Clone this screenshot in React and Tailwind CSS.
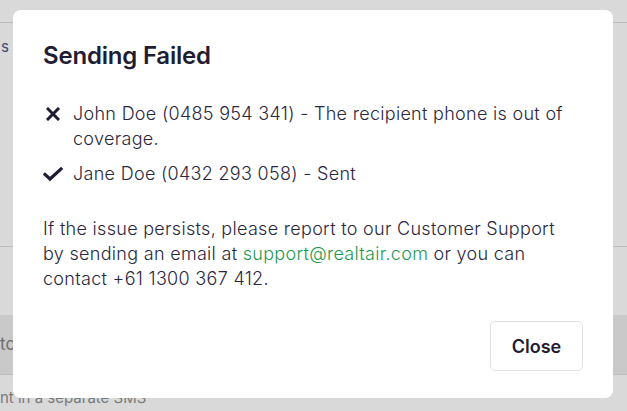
import React from 'react';

const font = { fontFamily: 'Inter, Roboto, "Liberation Sans", sans-serif' };

function CrossIcon() {
  return (
    <svg viewBox="0 0 14 14" className="w-[14px] h-[14px] shrink-0 mt-[6px] ml-[3px]">
      <path d="M2 2 L12 12 M12 2 L2 12" stroke="#1f1d33" strokeWidth="3" strokeLinecap="square" />
    </svg>
  );
}

function CheckIcon() {
  return (
    <svg viewBox="0 0 20 15" className="w-[20px] h-[15px] shrink-0 mt-[6px]">
      <path d="M2 7.5 L7 12 L18 2" stroke="#1f1d33" strokeWidth="3.2" fill="none" strokeLinecap="square" strokeLinejoin="miter" />
    </svg>
  );
}

export default function App() {
  return (
    <div className="relative w-[627px] h-[411px] overflow-hidden bg-[#d9d9d9]" style={font}>
      {/* page behind the overlay */}
      <div className="flex flex-col h-full">
        <div className="h-[23px] border-b border-[#bdbdbd]" />
        <div className="h-[224px] border-b border-[#bdbdbd] pt-[13px] pl-[1px] text-[15px] text-[#3d4a7a]">s</div>
        <div className="h-[68px]" />
        <div className="h-[60px] bg-[#c9c9c9] border-b border-[#bdbdbd] flex items-center text-[17px] text-[#6e6e6e]">tc</div>
        <div className="pt-[12px] text-[15px] text-[#7a7a7a]">nt in a separate SMS</div>
      </div>

      {/* modal */}
      <div className="absolute left-[13px] top-[10px] w-[600px] h-[388px] bg-white rounded-[8px] pl-[30px] pr-[43px] pt-[31px] text-[#2a2840]">
        <h2 className="text-[24px] font-semibold leading-[30px] text-[#1f1d33] tracking-[-0.2px]">Sending Failed</h2>
        <ul className="mt-[30px] flex flex-col gap-[10px] text-[18px] leading-[25px] tracking-[0.3px] font-[350]">
          <li className="flex gap-[13px]">
            <CrossIcon />
            <span>John Doe (0485 954 341) - The recipient phone is out of coverage.</span>
          </li>
          <li className="flex gap-[10px]">
            <CheckIcon />
            <span>Jane Doe (0432 293 058) - Sent</span>
          </li>
        </ul>
        <p className="mt-[30px] text-[18px] leading-[25px] tracking-[0.3px] font-[350]">
          If the issue persists, please report to our Customer Support by sending an email at{' '}
          <span className="text-[#1e9a4e]">support@realtair.com</span> or you can contact +61 1300 367 412.
        </p>
        <div className="flex justify-end mt-[30px] -mr-[13px]">
          <button className="w-[93px] h-[50px] border border-[#e3e3e3] rounded-[5px] text-[18px] font-semibold text-[#1f1d33]">Close</button>
        </div>
      </div>
    </div>
  );
}
